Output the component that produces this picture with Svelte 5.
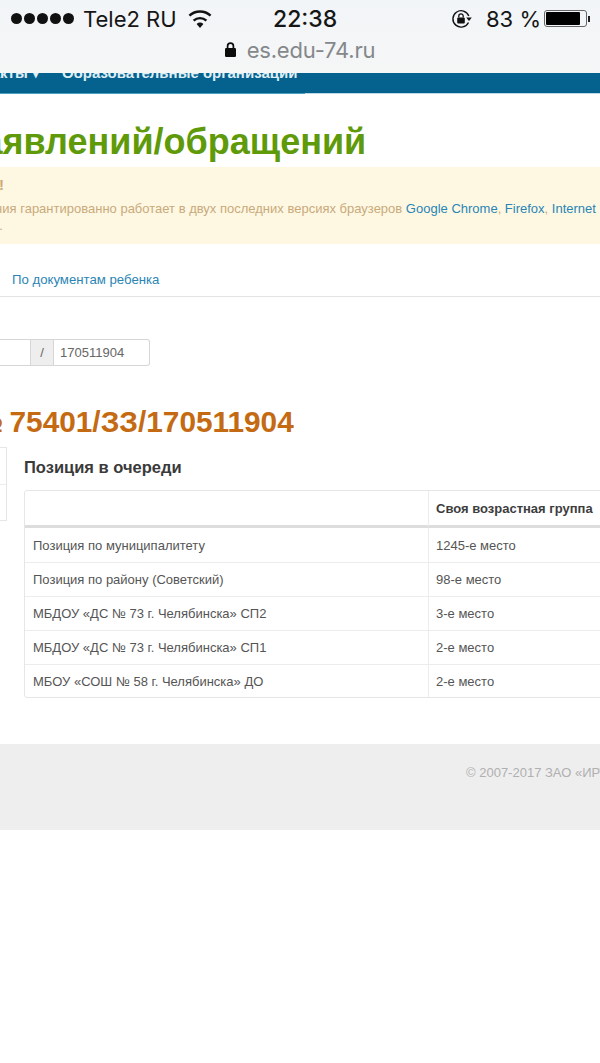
<script lang="ts">
  const rows = [
    { name: "Позиция по муниципалитету", place: "1245-е место" },
    { name: "Позиция по району (Советский)", place: "98-е место" },
    { name: "МБДОУ «ДС № 73 г. Челябинска» СП2", place: "3-е место" },
    { name: "МБДОУ «ДС № 73 г. Челябинска» СП1", place: "2-е место" },
    { name: "МБОУ «СОШ № 58 г. Челябинска» ДО", place: "2-е место" },
  ];
</script>

<div class="page">
  <header class="browser">
    <div class="status">
      <div class="dots">
        {#each [0, 1, 2, 3, 4] as d (d)}<span class="dot"></span>{/each}
      </div>
      <span class="carrier">Tele2 RU</span>
      <svg class="wifi" width="24" height="18" viewBox="0 0 24 18" aria-hidden="true">
        <path d="M12 18l-3.4-4a5.4 5.4 0 0 1 6.8 0z" fill="#111" />
        <path d="M5.6 10.6a9.6 9.6 0 0 1 12.8 0" fill="none" stroke="#111" stroke-width="2.4" />
        <path d="M1.4 5.6a15.6 15.6 0 0 1 21.2 0" fill="none" stroke="#111" stroke-width="2.4" />
      </svg>
      <span class="time">22:38</span>
      <svg class="rotate" width="22" height="20" viewBox="0 0 22 20" aria-hidden="true">
        <path d="M17.5 13.5A8.2 8.2 0 1 1 17.8 7" fill="none" stroke="#111" stroke-width="1.4" />
        <path d="M15.2 8.6h5.6L18 12z" fill="#111" />
        <rect x="6.2" y="8.5" width="7.6" height="6" rx="1" fill="#111" />
        <path d="M7.8 8.5V7a2.2 2.2 0 0 1 4.4 0v1.5" fill="none" stroke="#111" stroke-width="1.3" />
      </svg>
      <span class="battery-text">83 %</span>
      <div class="battery"><span class="battery-fill"></span></div>
      <span class="battery-tip"></span>
    </div>
    <div class="address">
      <svg width="11" height="15" viewBox="0 0 11 15" aria-hidden="true">
        <rect x="0" y="6" width="11" height="9" rx="1.2" fill="#0c0c0c" />
        <path d="M2.6 6.5V4a2.9 2.9 0 0 1 5.8 0v2.5" fill="none" stroke="#0c0c0c" stroke-width="1.7" />
      </svg>
      <span class="url">es.edu-74.ru</span>
    </div>
  </header>

  <nav class="nav">
    <span class="nav-item">Контакты ▾</span>
    <span class="nav-item active">Образовательные организации</span>
  </nav>

  <h1 class="title">заявлений/обращений</h1>

  <div class="alert">
    <div class="alert-head">Внимание!</div>
    <div class="alert-line">Корректная работа приложения гарантированно работает в двух последних версиях браузеров <a href="#c">Google Chrome</a>, <a href="#f">Firefox</a>, <a href="#i">Internet Explorer</a></div>
    <div class="alert-line last">и другие.</div>
  </div>

  <div class="tabs">
    <a class="tab" href="#d">По документам ребенка</a>
  </div>

  <div class="search">
    <span class="search-first"></span>
    <span class="search-sep">/</span>
    <span class="search-num">170511904</span>
  </div>

  <h2 class="number"><span class="number-cut">№</span> 75401/ЗЗ/170511904</h2>

  <div class="details">
    <div class="side">
      <div class="side-row"></div>
      <div class="side-row"></div>
    </div>
    <section class="queue">
      <h3 class="queue-title">Позиция в очереди</h3>
      <table class="queue-table">
        <thead>
          <tr>
            <th class="col-name"></th>
            <th>Своя возрастная группа</th>
          </tr>
        </thead>
        <tbody>
          {#each rows as row (row.name)}
            <tr>
              <td>{row.name}</td>
              <td>{row.place}</td>
            </tr>
          {/each}
        </tbody>
      </table>
    </section>
  </div>

  <footer class="footer">© 2007-2017 ЗАО «ИРТех»</footer>
</div>

<style>
  :global(body) {
    background: #fff;
  }

  .page {
    width: 600px;
    height: 1063px;
    overflow: hidden;
    background: #fff;
    font-family: "Liberation Sans", Arial, sans-serif;
  }

  .browser {
    height: 73px;
    background: linear-gradient(#f2f5f8, #f5f6f6);
    display: flex;
    flex-direction: column;
  }

  .status {
    display: flex;
    align-items: center;
    height: 37px;
    padding-left: 11px;
    font-family: Inter, "Liberation Sans", sans-serif;
    color: #161616;
  }

  .dots {
    display: flex;
    gap: 2px;
    width: 72px;
  }

  .dot {
    width: 11px;
    height: 11px;
    border-radius: 50%;
    background: #111;
  }

  .carrier {
    font-size: 22px;
    width: 105px;
    white-space: nowrap;
  }

  .wifi {
    width: 24px;
  }

  .time {
    margin-left: 61px;
    font-size: 23px;
    font-weight: 500;
    width: 178px;
  }

  .rotate {
    margin-right: 13px;
  }

  .battery-text {
    font-size: 22px;
    width: 58px;
    white-space: nowrap;
  }

  .battery {
    width: 43px;
    height: 17px;
    border: 1px solid #666;
    border-radius: 3px;
    padding: 1px;
    box-sizing: border-box;
    display: flex;
  }

  .battery-fill {
    width: 34px;
    background: #000;
    border-radius: 1px;
  }

  .battery-tip {
    width: 2px;
    height: 6px;
    margin-left: 1px;
    background: #222;
  }

  .address {
    display: flex;
    align-items: center;
    justify-content: center;
    gap: 11px;
    height: 25px;
    padding-bottom: 2px;
  }

  .url {
    font-family: Inter, "Liberation Sans", sans-serif;
    font-size: 22px;
    color: #85888a;
    letter-spacing: -0.2px;
  }

  .nav {
    height: 20px;
    background: #05628f;
    border-bottom: 1px solid;
    border-image: linear-gradient(to right, #4a9fc0 348px, #bcd9e4 348px) 1;
    overflow: hidden;
    display: flex;
    gap: 22px;
    margin-left: -43px;
    line-height: 0;
    color: #dfeef5;
    font-size: 15px;
    font-weight: 700;
  }

  .nav-item {
    white-space: nowrap;
  }

  .title {
    margin: 28px 0 0 -35px;
    height: 45px;
    font-size: 36px;
    line-height: 40px;
    font-weight: 700;
    color: #5f9a0a;
    white-space: nowrap;
  }

  .alert {
    height: 77px;
    box-sizing: border-box;
    padding-top: 9px;
    background: #fef8e3;
    color: #c9aa7b;
    font-size: 13px;
    white-space: nowrap;
    overflow: hidden;
  }

  .alert-head {
    margin-left: -76px;
    font-size: 15px;
    font-weight: 700;
    line-height: 18px;
  }

  .alert-line {
    margin-left: -176px;
    line-height: 17px;
    margin-top: 6px;
  }

  .alert-line.last {
    margin: 0 0 0 -52px;
  }

  .alert-line a {
    color: #2a85b5;
    text-decoration: none;
  }

  .tabs {
    height: 53px;
    box-sizing: border-box;
    padding: 26px 0 0 12px;
    border-bottom: 1px solid #e3e3e3;
  }

  .tab {
    color: #2a85b5;
    font-size: 13.2px;
    text-decoration: none;
  }

  .search {
    display: flex;
    width: 150px;
    height: 27px;
    margin-top: 42px;
    box-sizing: border-box;
    border: 1px solid #d6d6d6;
    border-left: none;
    border-radius: 0 3px 3px 0;
    font-size: 13px;
    color: #666;
    line-height: 25px;
  }

  .search-first {
    width: 30px;
  }

  .search-sep {
    width: 24px;
    background: #eee;
    border-left: 1px solid #d6d6d6;
    border-right: 1px solid #d6d6d6;
    box-sizing: border-box;
    text-align: center;
  }

  .search-num {
    padding-left: 6px;
  }

  .number {
    margin: 40px 0 0 -30px;
    height: 41px;
    font-size: 29.8px;
    line-height: 32px;
    font-weight: 700;
    color: #c46a12;
    white-space: nowrap;
  }

  .number-cut {
    margin-right: -2px;
  }

  .details {
    display: flex;
    gap: 17px;
  }

  .side {
    width: 7px;
    height: 74px;
    flex-shrink: 0;
    box-sizing: border-box;
    border: 1px solid #e6e6e6;
    border-left: none;
  }

  .side-row {
    height: 37px;
    box-sizing: border-box;
    border-bottom: 1px solid #ececec;
  }

  .side-row:last-child {
    border-bottom: none;
  }

  .queue {
    flex-shrink: 0;
  }

  .queue-title {
    margin: 10px 0 13px;
    font-size: 16.5px;
    line-height: 20px;
    font-weight: 700;
    color: #3a3a3a;
  }

  .queue-table {
    width: 640px;
    border-collapse: separate;
    border-spacing: 0;
    border: 1px solid #e6e6e6;
    border-radius: 3px;
    font-size: 13px;
    color: #555;
  }

  .queue-table th {
    height: 34px;
    padding: 0 7px;
    text-align: left;
    font-weight: 700;
    color: #3d3d3d;
    border-bottom: 3px solid #dddddd;
    border-left: 1px solid #ececec;
  }

  .queue-table .col-name {
    width: 389px;
    border-left: none;
  }

  .queue-table td {
    height: 33px;
    padding: 0 7px;
    border-bottom: 1px solid #ececec;
    border-left: 1px solid #ececec;
  }

  .queue-table td:first-child {
    border-left: none;
    padding-left: 8px;
  }

  .queue-table tbody tr:first-child td {
    height: 34px;
  }

  .queue-table tr:last-child td {
    height: 32px;
    border-bottom: none;
  }

  .footer {
    margin-top: 46px;
    height: 86px;
    box-sizing: border-box;
    padding: 21px 0 0 466px;
    background: #eee;
    color: #b0b0b0;
    font-size: 13px;
    white-space: nowrap;
    overflow: hidden;
  }
</style>
